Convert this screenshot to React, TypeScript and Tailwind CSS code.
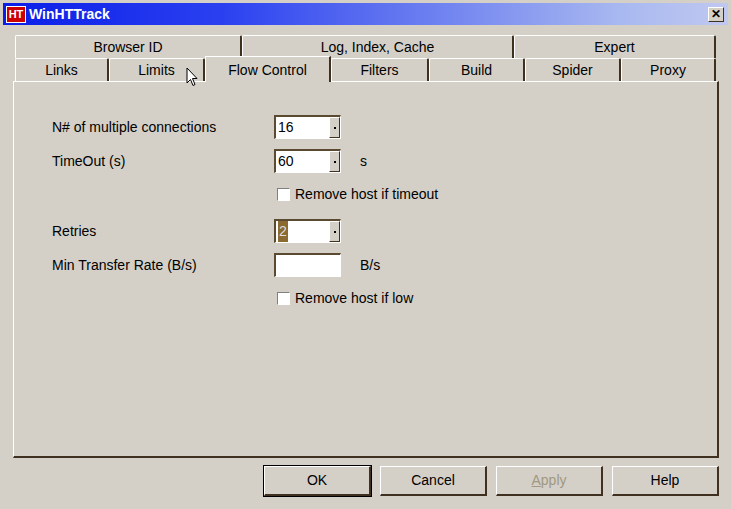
import React from "react";

const F = { fontFamily: '"Liberation Sans", Arial, sans-serif' };

function Tab({ w, label }: { w: number; label: string }) {
  return (
    <div
      style={{ width: w }}
      className="h-[23px] flex items-center justify-center border-t border-l border-white rounded-t-[2px] border-r-2 border-r-[#403020] text-[14px] text-black"
    >
      {label}
    </div>
  );
}

function Combo({ value, sel }: { value: string; sel?: boolean }) {
  return (
    <div className="w-[67px] h-[24px] flex border-t-2 border-l-2 border-[#5a4a30] border-b border-r border-b-white border-r-white bg-white">
      <div className="flex-1 flex items-center pl-[2px] text-[14px]">
        <span className={sel ? "bg-[#8a6a30] text-[#ddd] px-[1px]" : ""}>{value}</span>
      </div>
      <div className="w-[11px] bg-[#d4d0c8] border-t border-l border-white border-r border-b border-r-[#403020] border-b-[#403020] flex items-center justify-center">
        <div className="w-[2px] h-[2px] bg-black" />
      </div>
    </div>
  );
}

function Check({ label }: { label: string }) {
  return (
    <div className="flex items-center gap-[5px] text-[14px]">
      <div className="w-[13px] h-[13px] bg-white border-t border-l border-[#808080] border-b border-r border-b-white border-r-white" />
      <span>{label}</span>
    </div>
  );
}

function Btn({ label, def, dis }: { label: string; def?: boolean; dis?: boolean }) {
  return (
    <div className={`w-[107px] h-[30px] flex items-center justify-center text-[14px] border-t border-l border-white border-b-2 border-r-2 border-b-[#403020] border-r-[#403020] ${def ? "outline outline-1 outline-black" : ""} ${dis ? "text-[#a09880]" : "text-black"}`}>
      {dis ? <span><span className="underline">A</span>pply</span> : label}
    </div>
  );
}

const row = "grid grid-cols-[203px_67px_auto] items-center gap-x-[19px]";

export default function App() {
  return (
    <div style={F} className="w-[731px] h-[509px] bg-[#d4d0c8] border border-[#d4d0c8] relative overflow-hidden">
      <div className="h-[22px] mx-[2px] mt-[2px] flex items-center bg-[linear-gradient(to_right,#0a1ee8,#2a40f0_30%,#a8b8f0_85%,#c0c8f0)]">
        <div className="w-[20px] h-[17px] ml-[3px] bg-[#c00] flex items-center justify-center text-[11px] font-bold text-white leading-none border border-white">HT</div>
        <span className="ml-[3px] text-white font-bold text-[14px]">WinHTTrack</span>
        <div className="ml-auto mr-[4px] w-[16px] h-[15px] bg-[#d4d0c8] border-t border-l border-white border-b border-r border-b-[#403020] border-r-[#403020] flex items-center justify-center text-[12px] font-bold leading-none">✕</div>
      </div>
      <div className="ml-[12px] mt-[10px] w-[706px]">
        <div className="flex ml-[2px]">
          <Tab w={227} label="Browser ID" />
          <Tab w={272} label="Log, Index, Cache" />
          <Tab w={202} label="Expert" />
        </div>
        <div className="flex ml-[2px] items-end h-[23px] relative z-10">
          <Tab w={94} label="Links" />
          <Tab w={96} label="Limits" />
          <div className="w-[126px] h-[26px] -mb-[1px] bg-[#d4d0c8] flex items-start pt-[3px] justify-center border-t border-l border-white border-r-2 border-r-[#403020] text-[14px]">Flow Control</div>
          <Tab w={98} label="Filters" />
          <Tab w={96} label="Build" />
          <Tab w={96} label="Spider" />
          <Tab w={95} label="Proxy" />
        </div>
        <div className="h-[377px] border-t border-l border-white border-b-2 border-r-2 border-b-[#403020] border-r-[#403020] pl-[38px] pt-[33px] text-[14px]">
          <div className={row}>
            <span>N# of multiple connections</span><Combo value="16" /><span />
          </div>
          <div className={`${row} mt-[10px]`}>
            <span>TimeOut (s)</span><Combo value="60" /><span>s</span>
          </div>
          <div className="ml-[225px] mt-[11px]"><Check label="Remove host if timeout" /></div>
          <div className={`${row} mt-[14px]`}>
            <span>Retries</span><Combo value="2" sel /><span />
          </div>
          <div className={`${row} mt-[10px]`}>
            <span>Min Transfer Rate (B/s)</span>
            <div className="w-[67px] h-[24px] bg-white border-t-2 border-l-2 border-[#5a4a30] border-b border-r border-b-white border-r-white" />
            <span>B/s</span>
          </div>
          <div className="ml-[225px] mt-[11px]"><Check label="Remove host if low" /></div>
        </div>
      </div>
      <div className="flex gap-[9px] ml-[263px] mt-[8px]">
        <Btn label="OK" def />
        <Btn label="Cancel" />
        <Btn label="Apply" dis />
        <Btn label="Help" />
      </div>
      <svg className="absolute left-[185px] top-[66px]" width="13" height="21" viewBox="0 0 13 21">
        <path d="M1 1 L1 16 L4.5 12.5 L7 18.5 L9 17.5 L6.5 11.5 L11 11.5 Z" fill="white" stroke="black" strokeWidth="1" />
      </svg>
    </div>
  );
}
